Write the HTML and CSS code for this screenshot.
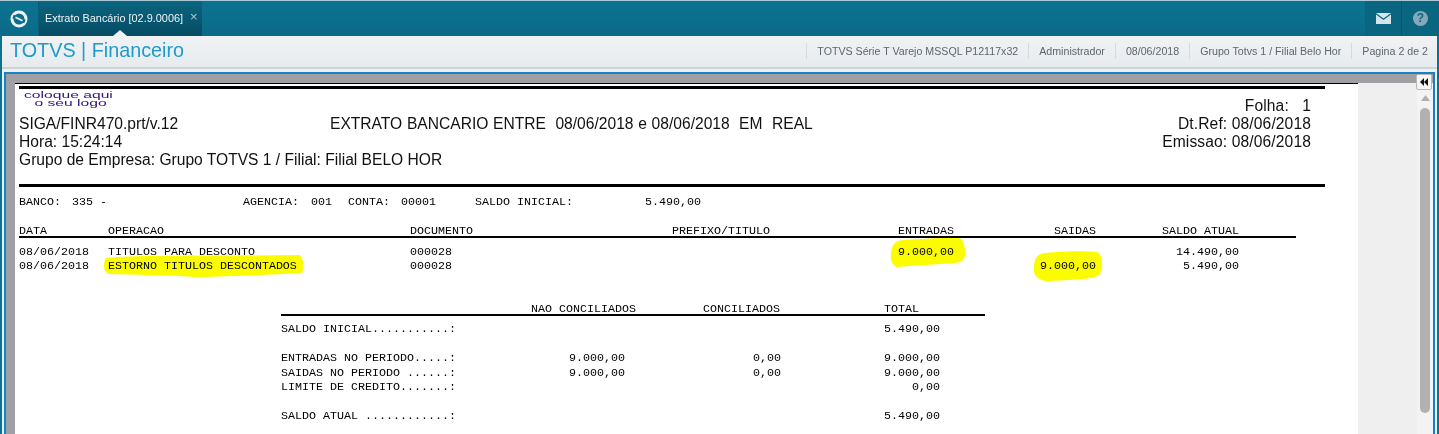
FILE: index.html
```html
<!DOCTYPE html>
<html lang="pt">
<head>
<meta charset="utf-8">
<title>Extrato Bancário</title>
<link rel="stylesheet" href="styles.css">
</head>
<body>
<div class="app">
  <header class="top">
    <div class="logo-cell">
      <svg width="22" height="22" viewBox="0 0 22 22"><circle cx="11" cy="11" r="7" fill="none" stroke="#f2f6f8" stroke-width="3"/><path d="M5 8.5 L17 13.5" stroke="#0b6f8c" stroke-width="3.6"/><path d="M7.5 9.3 L14.5 12.7" stroke="#f2f6f8" stroke-width="1.8"/></svg>
    </div>
    <div class="tab">
      <span>Extrato Bancário [02.9.0006]</span>
      <span class="tab-x">×</span>
      <i class="tab-notch"></i>
    </div>
    <div class="top-fill"></div>
    <div class="top-btn">
      <svg width="15" height="11" viewBox="0 0 15 11"><path d="M0 0H15L7.5 5.5Z" fill="#d5e4ea"/><path d="M0 1.5L7.5 7L15 1.5V11H0Z" fill="#d5e4ea"/></svg>
    </div>
    <div class="top-btn top-btn-help">
      <span class="help">?</span>
    </div>
  </header>
  <div class="body">
    <div class="head">
      <h1 class="title">TOTVS | Financeiro</h1>
      <ul class="info">
        <li>TOTVS Série T Varejo MSSQL P12117x32</li>
        <li>Administrador</li>
        <li>08/06/2018</li>
        <li>Grupo Totvs 1 / Filial Belo Hor</li>
        <li>Pagina 2 de 2</li>
      </ul>
    </div>
    <main class="frame">
      <div class="viewer">
        <div class="sheet">
          <svg class="marks" width="1343" height="260" viewBox="0 0 1343 260">
            <path d="M876 170C877 161 880 158 888 157C905 156 925 155 942 154C948 156 950 160 950 170C950 177 948 179 940 180C920 181 900 183 882 184C877 183 875 176 876 170Z" fill="#fcfc00"/>
            <path d="M1019 185C1019 175 1022 171 1030 170C1050 168 1070 168 1082 169C1087 172 1087 176 1087 182C1087 190 1084 194 1076 195C1060 197 1040 198 1030 198C1022 196 1018 192 1019 185Z" fill="#fcfc00"/>
            <path d="M91 175C120 172 200 173 284 172C289 174 289 186 287 190C250 192 220 193 180 194C150 192 120 192 93 191C88 188 88 180 91 175Z" fill="#fcfc00"/>
          </svg>
          <div class="rule-thin"></div>
          <div class="rule-thick"></div>
          <div class="brand"><span>coloque aqui</span><span class="brand-2">o seu logo</span></div>
          <div class="rep-head">
            <div class="rep-line"><span></span><span></span><span class="rep-right">Folha: &nbsp;&nbsp;1</span></div>
            <div class="rep-line"><span>SIGA/FINR470.prt/v.12</span><span class="rep-mid">EXTRATO BANCARIO ENTRE &nbsp;08/06/2018 e 08/06/2018 &nbsp;EM &nbsp;REAL</span><span class="rep-right">Dt.Ref: 08/06/2018</span></div>
            <div class="rep-line"><span>Hora: 15:24:14</span><span></span><span class="rep-right">Emissao: 08/06/2018</span></div>
            <div class="rep-line"><span>Grupo de Empresa: Grupo TOTVS 1 / Filial: Filial BELO HOR</span></div>
          </div>
          <div class="rule-mid"></div>
          <div class="mono bank">
            <span class="b1">BANCO:<span class="v">335 -</span></span>
            <span class="b2">AGENCIA:<span class="v v2">001</span></span>
            <span class="b3">CONTA:<span class="v">00001</span></span>
            <span class="b4">SALDO INICIAL:</span>
            <span>5.490,00</span>
          </div>
          <div class="mono tx tx-head">
            <span>DATA</span><span>OPERACAO</span><span>DOCUMENTO</span><span>PREFIXO/TITULO</span><span class="r">ENTRADAS</span><span class="r">SAIDAS</span><span class="r">SALDO ATUAL</span>
          </div>
          <div class="mono tx tx-first">
            <span>08/06/2018</span><span>TITULOS PARA DESCONTO</span><span>000028</span><span></span><span class="r">9.000,00</span><span></span><span class="r">14.490,00</span>
          </div>
          <div class="mono tx">
            <span>08/06/2018</span><span>ESTORNO TITULOS DESCONTADOS</span><span>000028</span><span></span><span></span><span class="r">9.000,00</span><span class="r">5.490,00</span>
          </div>
          <div class="mono sum-head">
            <span class="r">NAO CONCILIADOS</span><span class="r">CONCILIADOS</span><span class="st">TOTAL</span>
          </div>
          <div class="mono sum sum-first"><span>SALDO INICIAL...........:</span><span></span><span></span><span class="r">5.490,00</span></div>
          <div class="mono sum sum-gap"><span>ENTRADAS NO PERIODO.....:</span><span class="r">9.000,00</span><span class="r">0,00</span><span class="r">9.000,00</span></div>
          <div class="mono sum sum-next"><span>SAIDAS NO PERIODO ......:</span><span class="r">9.000,00</span><span class="r">0,00</span><span class="r">9.000,00</span></div>
          <div class="mono sum"><span>LIMITE DE CREDITO.......:</span><span></span><span></span><span class="r">0,00</span></div>
          <div class="mono sum sum-gap"><span>SALDO ATUAL ............:</span><span></span><span></span><span class="r">5.490,00</span></div>
        </div>
        <aside class="side">
          <div class="collapse">
            <svg width="10" height="8" viewBox="0 0 10 8"><path d="M5 0V8L1 4Z M9 0V8L5 4Z" fill="#111"/></svg>
          </div>
          <div class="scroll">
            <svg class="arrow" width="9" height="6" viewBox="0 0 9 6"><path d="M4.5 0L9 6H0Z" fill="#b0b0b0"/></svg>
            <div class="thumb"></div>
          </div>
        </aside>
      </div>
    </main>
  </div>
</div>
</body>
</html>
```
FILE: styles.css
```css
* { box-sizing: border-box; }
html, body { margin: 0; padding: 0; height: 434px; overflow: hidden; background: #fff; }
.app { display: flex; flex-direction: column; height: 434px; font-family: "Liberation Sans", Arial, sans-serif; background: #0b7391; }

.top { display: flex; height: 36px; flex: none; background: linear-gradient(#0b7391, #0a6b88); border-top: 1px solid #a9c9d6; }
.logo-cell { width: 39px; display: flex; align-items: center; justify-content: center; border-right: 1px solid #0a5e78; }
.tab { position: relative; width: 163px; display: flex; align-items: center; gap: 7px; padding: 0 0 2px 6px; color: #eef4f7; font-size: 10.9px; white-space: nowrap; background: linear-gradient(#0a6580, #064c63); }
.tab-x { color: #b4c9d2; font-size: 13px; margin-top: -2px; }
.tab-notch { position: absolute; left: 74px; bottom: 0; width: 0; height: 0; border-left: 7px solid transparent; border-right: 7px solid transparent; border-bottom: 6px solid #eef0f2; }
.top-fill { flex: 1; }
.top-btn { width: 36px; display: flex; align-items: center; justify-content: center; background: #0a6680; }
.top-btn-help { width: 38px; border-left: 1px solid #06566c; }
.help { width: 15px; height: 15px; border-radius: 50%; background: #86a9b8; color: #0a6680; font-size: 12px; font-weight: bold; line-height: 15px; text-align: center; }

.body { flex: 1; min-height: 0; display: flex; flex-direction: column; margin: 0 2px; background: #eef0f2; }
.head { display: flex; align-items: center; justify-content: space-between; height: 33px; flex: none; padding: 0 0 2px 8px; background: linear-gradient(#f0f2f4, #e8ebee); border-bottom: 2px solid #cfd3d6; }
.title { margin: 0; font-size: 19.8px; font-weight: normal; color: #1c9cc6; }
.info { display: flex; align-items: center; list-style: none; margin: 0; padding: 0; font-size: 10.65px; color: #5d6670; }
.info li { padding: 0 10px; height: 16px; line-height: 16px; border-left: 1px solid #d6dadd; }
.info li:last-child { padding-right: 9px; }

.frame { flex: 1; margin: 3px 2px 0 2px; border: 2px solid #1383c4; border-bottom: 0; background: #a09fa3; padding: 9px 0 0 9px; min-height: 0; }
.viewer { display: flex; height: 100%; }
.sheet { position: relative; width: 1343px; flex: none; background: #fff; padding: 0 0 0 4px; color: #000; overflow: hidden; }
.marks { position: absolute; left: 0; top: 0; mix-blend-mode: multiply; }
.rule-thin { height: 1px; background: #000; margin-left: -4px; }
.rule-thick { height: 3px; margin: 2px 33px 0 0; background: #000; }
.brand { display: flex; flex-direction: column; width: 60px; margin: 2px 0 0 5px; height: 14px; font-size: 9px; line-height: 8px; color: #35107a; transform-origin: left top; transform: scale(1.74, 1); white-space: nowrap; }
.brand-2 { padding-left: 6px; }
.rep-head { margin-top: -8px; font-size: 15.6px; line-height: 18px; color: #111; }
.rep-line { display: grid; grid-template-columns: 311px 1fr auto; padding-right: 47px; white-space: nowrap; height: 18px; }
.rep-mid { word-spacing: .4px; }
.rep-right { text-align: right; letter-spacing: .12px; }
.rule-mid { height: 3px; margin: 15px 33px 0 0; background: #000; }
.mono { font-family: "Liberation Mono", "Courier New", monospace; font-size: 11.67px; line-height: 14px; white-space: nowrap; height: 14px; }
.bank { display: flex; margin-top: 8px; }
.v { margin-left: 11px; }
.v2 { margin-left: 12px; }
.b1 { width: 224px; }
.b2 { width: 105px; }
.b3 { width: 127px; }
.b4 { width: 170px; }
.tx { display: grid; grid-template-columns: 89px 302px 262px 120px 162px 142px 143px; width: 1277px; }
.tx-head { margin-top: 15px; border-bottom: 2px solid #000; }
.tx-first { margin-top: 7px; }
.r { text-align: right; }
.sum-head { display: grid; grid-template-columns: 355px 144px 1fr; width: 704px; margin: 29px 0 0 262px; border-bottom: 2px solid #000; }
.st { padding-left: 104px; }
.sum { display: grid; grid-template-columns: 180px 164px 156px 159px; margin-left: 262px; width: 659px; }
.sum-first { margin-top: 6px; }
.sum-gap { margin-top: 15px; }
.sum-next { margin-top: 1px; }

.side { position: relative; flex: 1; background: #efefef; }
.collapse { position: absolute; z-index: 1; right: 1px; top: -9px; width: 16px; height: 16px; display: flex; align-items: center; justify-content: center; background: #f5f5f5; border: 1px solid #b9b9b9; border-radius: 2px; }
.scroll { position: absolute; right: 0; top: 0; bottom: 0; width: 16px; padding: 12px 3px 0; display: flex; flex-direction: column; align-items: center; gap: 7px; background: #f3f3f3; }
.arrow { flex: none; }
.thumb { flex: none; width: 10px; height: 305px; background: #b1b1b1; border-radius: 5px; }
```
